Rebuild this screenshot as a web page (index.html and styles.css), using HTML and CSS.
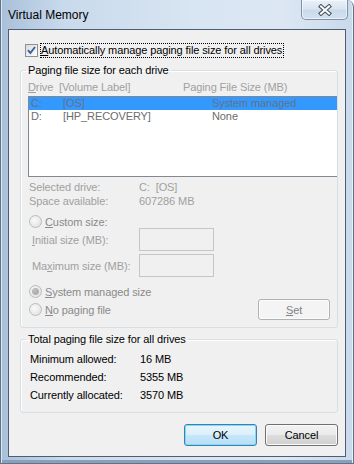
FILE: index.html
```html
<!DOCTYPE html>
<html lang="en">
<head>
    <meta charset="UTF-8">
    <title>Virtual Memory</title>
    <link rel="stylesheet" href="styles.css">
</head>
<body>
    <div class="window">
        <div class="titlebar">
            <span class="title">Virtual Memory</span>
            <button class="close-btn" aria-label="Close">
                <svg width="14" height="12" viewBox="0 0 14 12">
                    <path d="M3 2.5 L11 9.5 M11 2.5 L3 9.5" stroke="#4c5564" stroke-width="4.2" stroke-linecap="square"/>
                    <path d="M3 2.5 L11 9.5 M11 2.5 L3 9.5" stroke="#ffffff" stroke-width="2" stroke-linecap="square"/>
                </svg>
            </button>
        </div>

        <div class="client">
            <div class="auto-row">
                <span class="checkbox">
                    <svg width="11" height="11" viewBox="0 0 11 11">
                        <path d="M2 5.2 L4.4 8 L9 2" fill="none" stroke="#3d5c9e" stroke-width="1.9"/>
                    </svg>
                </span>
                <span class="focus-label"><u>A</u>utomatically manage paging file size for all drives</span>
            </div>

            <!-- Per drive settings -->
            <fieldset class="group drives-group">
                <legend>Paging file size for each drive</legend>
                <div class="list-head disabled">
                    <span class="head-drive"><u>D</u>rive</span>
                    <span class="head-label">[Volume Label]</span>
                    <span>Paging File Size (MB)</span>
                </div>
                <div class="listbox">
                    <div class="list-row selected">
                        <span class="col-drive">C:</span>
                        <span class="col-label">[OS]</span>
                        <span>System managed</span>
                    </div>
                    <div class="list-row">
                        <span class="col-drive">D:</span>
                        <span class="col-label">[HP_RECOVERY]</span>
                        <span>None</span>
                    </div>
                </div>

                <div class="info disabled">
                    <span>Selected drive:</span><span>C:&nbsp; [OS]</span>
                    <span>Space available:</span><span>607286 MB</span>
                </div>

                <div class="radio-row custom-row">
                    <span class="radio"></span>
                    <span><u>C</u>ustom size:</span>
                </div>
                <div class="size-row disabled">
                    <span class="size-label"><u>I</u>nitial size (MB):</span>
                    <span class="textbox"></span>
                </div>
                <div class="size-row max-row disabled">
                    <span class="size-label">Ma<u>x</u>imum size (MB):</span>
                    <span class="textbox"></span>
                </div>
                <div class="radio-row system-row">
                    <span class="radio checked"></span>
                    <span><u>S</u>ystem managed size</span>
                </div>
                <div class="radio-row nopage-row">
                    <span class="radio-wrap">
                        <span class="radio"></span>
                        <span><u>N</u>o paging file</span>
                    </span>
                    <button class="btn btn-disabled"><u>S</u>et</button>
                </div>
            </fieldset>

            <!-- Totals -->
            <fieldset class="group totals-group">
                <legend>Total paging file size for all drives</legend>
                <div class="totals">
                    <span>Minimum allowed:</span><span>16 MB</span>
                    <span>Recommended:</span><span>5355 MB</span>
                    <span>Currently allocated:</span><span>3570 MB</span>
                </div>
            </fieldset>

            <div class="actions">
                <button class="btn btn-default">OK</button>
                <button class="btn">Cancel</button>
            </div>
        </div>
    </div>
</body>
</html>
```

FILE: styles.css
```css
/* Window frame */
body {
    margin: 0;
    width: 354px;
    height: 464px;
    overflow: hidden;
    font-family: "Liberation Sans", Arial, sans-serif;
    font-size: 11px;
    letter-spacing: -0.1px;
    color: #000;
    background: #ffffff;
}

.window {
    box-sizing: border-box;
    width: 354px;
    height: 464px;
    display: flex;
    flex-direction: column;
    border: 1px solid #5f738b;
    border-top: none;
    border-top-right-radius: 7px;
    background: linear-gradient(to right, #a9c0da 0%, #c9daec 18%, #d8e5f2 55%, #dce7f3 80%, #c9d9eb 100%);
    box-shadow: inset 1px 0 0 #dbe6f2, inset -1px 0 0 #e6eef7, inset 0 -3px 0 #8aa0b8;
}

.titlebar {
    height: 29px;
    flex: none;
    display: flex;
    justify-content: space-between;
    align-items: flex-start;
    padding-left: 7px;
    padding-right: 5px;
}

.title {
    font-size: 12px;
    letter-spacing: 0;
    line-height: 30px;
    color: #000;
}

.close-btn {
    box-sizing: border-box;
    width: 47px;
    height: 20px;
    padding: 0;
    display: flex;
    justify-content: center;
    align-items: center;
    border: 1px solid #7f91a8;
    border-top: none;
    border-radius: 0 0 5px 5px;
    background: linear-gradient(#e9f0f7 0%, #dae5f1 45%, #cbdaea 55%, #d3e1ef 100%);
    box-shadow: inset 0 0 0 1px rgba(255, 255, 255, 0.55);
}

.client {
    box-sizing: border-box;
    height: 428px;
    margin: 0 7px 6px 7px;
    border: 1px solid #4d5e72;
    background-color: #f0f0f0;
    padding: 13px 7px 0 0;
    display: flex;
    flex-direction: column;
}

u {
    text-decoration: underline;
    text-underline-offset: 1px;
}

/* Top checkbox */
.auto-row {
    display: flex;
    align-items: center;
    margin-left: 16px;
    height: 15px;
}

.checkbox {
    box-sizing: border-box;
    width: 13px;
    height: 13px;
    border: 1px solid #8e8f8f;
    background: linear-gradient(135deg, #d8dadd 0%, #f2f3f4 70%, #fbfbfb 100%);
    display: flex;
    justify-content: center;
    align-items: center;
}

.focus-label {
    margin-left: 2px;
    padding-right: 1px;
    line-height: 13px;
    border: 1px dotted #000;
    white-space: nowrap;
}

/* Group boxes */
.group {
    margin: 0 0 0 11px;
    padding: 0 7px 0 7px;
    border: 1px solid #d5dfe5;
    border-radius: 3px;
    box-shadow: inset 1px 1px 0 #fff;
    min-width: 0;
}

.group legend {
    padding: 0 2px;
    margin-left: -2px;
    line-height: 13px;
    color: #000;
    white-space: nowrap;
}

.drives-group {
    margin-top: 6px;
    padding-bottom: 7px;
}

.disabled {
    color: #a0a0a0;
}

.list-head {
    display: flex;
    margin-top: 3px;
    line-height: 14px;
    white-space: nowrap;
}

.head-drive {
    width: 31px;
}

.head-label {
    width: 124px;
}

.listbox {
    box-sizing: border-box;
    height: 81px;
    margin-top: 2px;
    margin-right: -7px;
    border: 1px solid #828790;
    border-right: none;
    background: #fff;
}

.list-row {
    display: flex;
    height: 13px;
    line-height: 13px;
    padding-left: 2px;
    color: #6d6d6d;
    white-space: nowrap;
}

.list-row.selected {
    background: #3399ff;
    color: #66717f;
}

.col-drive {
    width: 32px;
}

.col-label {
    width: 149px;
}

.info {
    display: grid;
    grid-template-columns: 110px auto;
    margin-top: 3px;
    padding-left: 1px;
    line-height: 14px;
    white-space: nowrap;
}

/* Radios and size fields */
.radio-row {
    display: flex;
    align-items: center;
    white-space: nowrap;
    color: #8a8a8a;
}

.radio-wrap {
    display: flex;
    align-items: center;
}

.radio {
    box-sizing: border-box;
    width: 13px;
    height: 13px;
    margin-left: 1px;
    margin-right: 3px;
    border: 1px solid #bcbcbc;
    border-radius: 50%;
    background: radial-gradient(circle at 40% 40%, #fafafa 0%, #e8e8e8 60%, #dcdcdc 100%);
    display: flex;
    justify-content: center;
    align-items: center;
}

.radio.checked::after {
    content: "";
    width: 5px;
    height: 5px;
    border-radius: 50%;
    background: radial-gradient(circle at 40% 40%, #c8c8c8, #8f8f8f);
    box-shadow: 0 0 0 1px #b4b4b4;
}

.custom-row {
    height: 13px;
    margin-top: 7px;
}

.size-row {
    display: grid;
    grid-template-columns: 111px 75px;
    align-items: center;
    height: 23px;
    white-space: nowrap;
}

.size-label {
    padding-left: 4px;
}

.textbox {
    box-sizing: border-box;
    height: 23px;
    border: 1px solid #c3c7ca;
    background: #f0f0f0;
}

.max-row {
    margin-top: 3px;
}

.system-row {
    height: 13px;
    margin-top: 8px;
}

.nopage-row {
    justify-content: space-between;
    height: 21px;
    margin-top: 1px;
}

/* Totals */
.totals-group {
    margin-top: 5px;
    padding-bottom: 8px;
}

.totals {
    display: grid;
    grid-template-columns: 110px auto;
    grid-auto-rows: 18px;
    align-items: center;
    margin-top: 4px;
    padding-left: 2px;
    white-space: nowrap;
}

/* Buttons */
.actions {
    display: flex;
    justify-content: flex-end;
    gap: 8px;
    margin-top: 11px;
}

.btn {
    box-sizing: border-box;
    width: 73px;
    height: 22px;
    padding: 0;
    font-family: inherit;
    font-size: 11px;
    letter-spacing: -0.1px;
    color: #000;
    border: 1px solid #707070;
    border-radius: 3px;
    background: linear-gradient(#f2f2f2 0%, #ebebeb 50%, #dddddd 51%, #cfcfcf 100%);
    box-shadow: inset 0 0 0 1px #fbfbfb;
}

.btn-default {
    border-color: #3c7fb1;
    background: linear-gradient(#e8f5fc 0%, #dbeffb 50%, #c7e7f9 51%, #b6def6 100%);
    box-shadow: inset 0 0 0 1px #7fdcf9;
}

.btn-disabled {
    width: 72px;
    height: 21px;
    color: #838383;
    border-color: #adb2b5;
    background: #f4f4f4;
    box-shadow: inset 0 0 0 1px #fcfcfc;
}
```
